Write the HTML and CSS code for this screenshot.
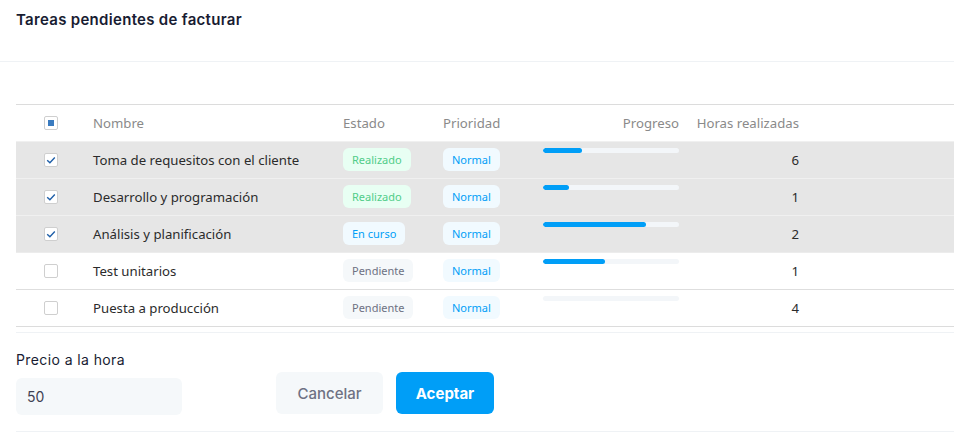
FILE: index.html
```html
<!DOCTYPE html>
<html lang="es">
<head>
<meta charset="utf-8">
<title>Tareas pendientes de facturar</title>
<link rel="stylesheet" href="styles.css">
</head>
<body>
<div class="modal">
  <div class="modal-header">
    <h3 class="modal-title">Tareas pendientes de facturar</h3>
  </div>
  <div class="modal-body">
    <div class="grid">
      <div class="row head">
        <div class="cell chk"><span class="box indet"><span class="dot"></span></span></div>
        <div class="cell">Nombre</div>
        <div class="cell">Estado</div>
        <div class="cell">Prioridad</div>
        <div class="cell right">Progreso</div>
        <div class="cell right">Horas realizadas</div>
        <div class="cell"></div>
      </div>

      <div class="row sel">
        <div class="cell chk"><span class="box"><svg viewBox="0 0 14 14" width="14" height="14"><path d="M3.2 7.2 L5.9 9.8 L10.8 4.6" fill="none" stroke="#1f5fa8" stroke-width="1.4"/></svg></span></div>
        <div class="cell name">Toma de requesitos con el cliente</div>
        <div class="cell"><span class="badge success">Realizado</span></div>
        <div class="cell"><span class="badge info">Normal</span></div>
        <div class="cell top"><div class="track"><div class="fill" style="width:28.5%"></div></div></div>
        <div class="cell right num">6</div>
        <div class="cell"></div>
      </div>

      <div class="row sel">
        <div class="cell chk"><span class="box"><svg viewBox="0 0 14 14" width="14" height="14"><path d="M3.2 7.2 L5.9 9.8 L10.8 4.6" fill="none" stroke="#1f5fa8" stroke-width="1.4"/></svg></span></div>
        <div class="cell name">Desarrollo y programación</div>
        <div class="cell"><span class="badge success">Realizado</span></div>
        <div class="cell"><span class="badge info">Normal</span></div>
        <div class="cell top"><div class="track"><div class="fill" style="width:19%"></div></div></div>
        <div class="cell right num">1</div>
        <div class="cell"></div>
      </div>

      <div class="row sel">
        <div class="cell chk"><span class="box"><svg viewBox="0 0 14 14" width="14" height="14"><path d="M3.2 7.2 L5.9 9.8 L10.8 4.6" fill="none" stroke="#1f5fa8" stroke-width="1.4"/></svg></span></div>
        <div class="cell name">Análisis y planificación</div>
        <div class="cell"><span class="badge info">En curso</span></div>
        <div class="cell"><span class="badge info">Normal</span></div>
        <div class="cell top"><div class="track"><div class="fill" style="width:76%"></div></div></div>
        <div class="cell right num">2</div>
        <div class="cell"></div>
      </div>

      <div class="row">
        <div class="cell chk"><span class="box"></span></div>
        <div class="cell name">Test unitarios</div>
        <div class="cell"><span class="badge muted">Pendiente</span></div>
        <div class="cell"><span class="badge info">Normal</span></div>
        <div class="cell top"><div class="track"><div class="fill" style="width:45.5%"></div></div></div>
        <div class="cell right num">1</div>
        <div class="cell"></div>
      </div>

      <div class="row last">
        <div class="cell chk"><span class="box"></span></div>
        <div class="cell name">Puesta a producción</div>
        <div class="cell"><span class="badge muted">Pendiente</span></div>
        <div class="cell"><span class="badge info">Normal</span></div>
        <div class="cell top"><div class="track"><div class="fill" style="width:0%"></div></div></div>
        <div class="cell right num">4</div>
        <div class="cell"></div>
      </div>
    </div>

    <div class="footer">
      <div class="field">
        <label class="label">Precio a la hora</label>
        <input class="input" type="text" value="50">
      </div>
      <div class="actions">
        <button class="btn btn-light">Cancelar</button>
        <button class="btn btn-primary">Aceptar</button>
      </div>
    </div>
  </div>
</div>
</body>
</html>
```
FILE: styles.css
```css
* { box-sizing: border-box; }
html, body { margin: 0; padding: 0; background: #fff; }
body { font-family: "Noto Sans", "Open Sans", sans-serif; color: #333; }

.modal { width: 954px; }

.modal-header {
  height: 62px;
  border-bottom: 1px solid #eff2f5;
  padding: 10px 16px 0;
}
.modal-title {
  margin: 0;
  font-family: Inter, "Noto Sans", sans-serif;
  font-weight: 600;
  font-size: 15px;
  line-height: 20px;
  color: #181c32;
  letter-spacing: 0.3px;
}

.modal-body { padding: 42px 0 0 16px; }

.grid {
  border-top: 1px solid #dcdcdc;
  border-bottom: 1px solid #dcdcdc;
}
.row {
  display: grid;
  grid-template-columns: 77px 250px 100px 100px 136px 120px 1fr;
  height: 37px;
  border-top: 1px solid #dedede;
  font-size: 13.2px;
}
.row.head { height: 36px; border-top: 0; color: #8a8a8a; }
.row.sel { background: #e6e6e6; border-top-color: #f0f0f0; }
.row.sel + .row:not(.sel) { border-top-color: #ececec; }

.cell { display: flex; align-items: center; white-space: nowrap; padding-bottom: 1px; }
.cell.right { justify-content: flex-end; }
.cell.top { align-items: flex-start; padding-top: 6px; }
.cell.chk { padding-left: 28px; }
.name { color: #2b2b2b; }
.num { color: #2b2b2b; }

.box {
  width: 14px; height: 14px;
  border: 1px solid #cfcfcf;
  border-radius: 2px;
  background: #fff;
  display: flex; align-items: center; justify-content: center;
}
.box svg { display: block; margin: -1px; }
.box .dot { width: 6px; height: 6px; background: #3a7bbf; }

.badge {
  display: inline-flex; align-items: center;
  height: 23px;
  padding: 0 9px;
  border-radius: 6px;
  font-size: 11px;
  font-weight: 400;
}
.badge.success { background: #e8fff3; color: #50cd89; }
.badge.info { background: #f1faff; color: #009ef7; }
.badge.muted { background: #f5f8fa; color: #6e7183; }

.track {
  width: 136px; height: 5px;
  background: #f3f6f9;
  border-radius: 3px;
  overflow: hidden;
}
.fill { height: 100%; background: #009ef7; border-radius: 3px; }

.footer {
  margin-top: 5px;
  border-top: 1px solid #eff2f5;
  border-bottom: 1px solid #eff2f5;
  padding: 18px 0 16px;
  display: flex;
  align-items: flex-end;
  gap: 94px;
}
.field { display: flex; flex-direction: column; gap: 9px; }
.label {
  font-family: Inter, "Noto Sans", sans-serif;
  font-weight: 400;
  font-size: 14px;
  line-height: 18px;
  color: #181c32;
  letter-spacing: 0.4px;
}
.input {
  width: 166px; height: 37px;
  border: 0; border-radius: 6px;
  background: #f5f8fa;
  padding: 0 11px;
  font-family: Inter, "Noto Sans", sans-serif;
  font-size: 14px;
  color: #3f4254;
  outline: none;
}
.actions { display: flex; gap: 13px; margin-bottom: 1px; }
.btn {
  height: 42px;
  border: 0; border-radius: 6px;
  font-family: Inter, "Noto Sans", sans-serif;
  font-size: 15px;
  cursor: pointer;
}
.btn-light { width: 107px; background: #f5f8fa; color: #6e7183; font-weight: 500; }
.btn-primary { width: 98px; background: #009ef7; color: #fff; font-weight: 700; }
```
